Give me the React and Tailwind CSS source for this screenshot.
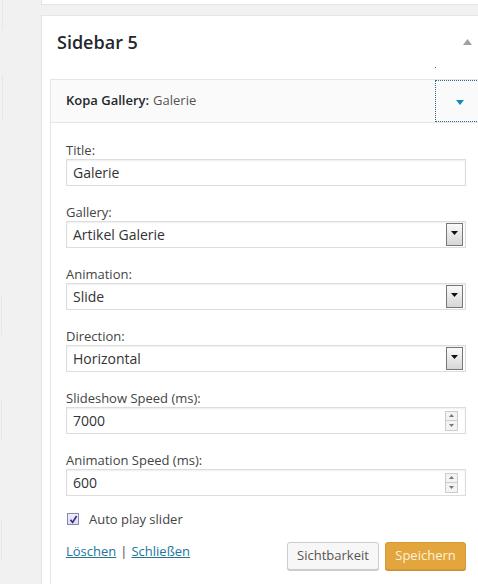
import React from "react";

const FONT = { fontFamily: '"Open Sans", "Noto Sans", Arial, sans-serif' };

const Label = ({ children }) => (
  <label className="block h-[18px] text-[13px] leading-[18px] text-[#444]">{children}</label>
);

// old-style select with a boxed arrow at the right edge
const SelectBox = ({ value }) => (
  <div className="flex items-center h-[27px] border border-[#ddd] bg-white shadow-[inset_0_1px_2px_rgba(0,0,0,0.07)] pl-[6px] pr-[2px]">
    <span className="flex-1 text-[14px] text-[#333]">{value}</span>
    <div className="w-[17px] h-[23px] border border-[#777] bg-gradient-to-b from-[#fafafa] to-[#d6d6d6] flex items-start justify-center pt-[7px]">
      <svg width="7" height="4" viewBox="0 0 7 4">
        <path d="M0 0h7L3.5 4z" fill="#111" />
      </svg>
    </div>
  </div>
);

const NumberBox = ({ value }) => (
  <div className="flex items-center h-[27px] border border-[#ddd] bg-white shadow-[inset_0_1px_2px_rgba(0,0,0,0.07)] pl-[6px] pr-[7px]">
    <span className="flex-1 text-[14px] text-[#333]">{value}</span>
    <div className="flex flex-col w-[13px]">
      <div className="h-[10px] border border-[#ccc] bg-[#f3f3f3] flex items-center justify-center">
        <svg width="5" height="3" viewBox="0 0 5 3">
          <path d="M0 3h5L2.5 0z" fill="#777" />
        </svg>
      </div>
      <div className="h-[10px] border border-t-0 border-[#ccc] bg-[#f3f3f3] flex items-center justify-center">
        <svg width="5" height="3" viewBox="0 0 5 3">
          <path d="M0 0h5L2.5 3z" fill="#777" />
        </svg>
      </div>
    </div>
  </div>
);

const TextBox = ({ value }) => (
  <div className="flex items-center h-[27px] border border-[#ddd] bg-white shadow-[inset_0_1px_2px_rgba(0,0,0,0.07)] px-[6px]">
    <span className="text-[14px] text-[#333]">{value}</span>
  </div>
);

const Field = ({ label, children }) => (
  <div className="mb-[17px]">
    <Label>{label}</Label>
    {children}
  </div>
);

export default function App() {
  return (
    <div className="w-[478px] h-[584px] bg-[#f1f1f1] overflow-hidden flex" style={FONT}>
      {/* collapsed widgets in the left column */}
      <div className="w-[41px] shrink-0 flex flex-col">
        <div className="h-[30px] w-[3px] shrink-0 border-r border-[#e6e6e6]" />
        <div className="h-[45px] shrink-0" />
        <div className="h-[45px] w-[3px] shrink-0 border-r border-[#e6e6e6]" />
        <div className="h-[175px] shrink-0" />
        <div className="h-[40px] w-[2px] shrink-0 border-r border-[#e6e6e6]" />
        <div className="h-[65px] shrink-0" />
        <div className="h-[40px] w-[2px] shrink-0 border-r border-[#e6e6e6]" />
        <div className="h-[80px] shrink-0" />
        <div className="h-[40px] w-[2px] shrink-0 border-r border-[#e6e6e6]" />
      </div>

      <div className="w-[445px] shrink-0 flex flex-col">
        <div className="h-[5px] shrink-0 bg-white border-b border-[#e5e5e5] border-l" />
        <div className="h-[10px] shrink-0" />

        {/* sidebar area */}
        <div className="flex-1 shrink-0 bg-white border-l border-t border-[#e5e5e5] shadow-[0_1px_1px_rgba(0,0,0,0.04)]">
          <div className="h-[63px] flex items-start pl-[15px] pr-[12px] pt-[14px]">
            <h2 className="flex-1 text-[18px] font-semibold text-[#23282d] leading-[24px]">Sidebar 5</h2>
            <svg width="9" height="6" viewBox="0 0 9 6" className="mt-[9px] mr-[2px]">
              <path d="M0 6h9L4.5 0z" fill="#a0a0a0" />
            </svg>
          </div>

          {/* open widget */}
          <div className="ml-[8px] w-[432px] border border-[#e5e5e5] bg-white">
            <div className="flex h-[43px] bg-[#fafafa] border-b border-[#e5e5e5]">
              <div className="flex-1 flex items-center pl-[15px] text-[13px] text-[#23282d]">
                <span className="font-semibold">Kopa Gallery:</span>
                <span className="ml-[4px] text-[#555]">Galerie</span>
              </div>
              <div className="relative w-[46px] border border-dotted border-[#2a6f80] flex items-center justify-start pl-[20px] pt-[2px]">
                <div className="absolute -top-[14px] left-[-1px] w-[1px] h-[1px] bg-[#555]" />
                <svg width="8" height="5" viewBox="0 0 8 5">
                  <path d="M0 0h8L4 5z" fill="#0f8bc0" />
                </svg>
              </div>
            </div>

            <div className="pt-[18px] pl-[15px] pr-[15px]">
              <Field label="Title:">
                <TextBox value="Galerie" />
              </Field>
              <Field label="Gallery:">
                <SelectBox value="Artikel Galerie" />
              </Field>
              <Field label="Animation:">
                <SelectBox value="Slide" />
              </Field>
              <Field label="Direction:">
                <SelectBox value="Horizontal" />
              </Field>
              <Field label="Slideshow Speed (ms):">
                <NumberBox value="7000" />
              </Field>
              <div>
                <Label>Animation Speed (ms):</Label>
                <NumberBox value="600" />
              </div>

              <div className="flex items-center mt-[14px] pl-[1px]">
                <div className="w-[12px] h-[12px] border border-[#8a8aa8] bg-gradient-to-b from-[#eef] to-[#dde] flex items-center justify-center">
                  <svg width="9" height="9" viewBox="0 0 9 9">
                    <path d="M1.5 4.8L3.6 7.4L7.6 1" fill="none" stroke="#2b2b8a" strokeWidth="1.6" />
                  </svg>
                </div>
                <span className="ml-[10px] text-[13px] text-[#444] leading-[18px]">Auto play slider</span>
              </div>

              <div className="flex justify-between mt-[14px]">
                <div className="text-[13px] text-[#444] leading-[18px]">
                  <a className="text-[#21759b] underline">Löschen</a>
                  <span className="mx-[4px]">|</span>
                  <a className="text-[#21759b] underline">Schließen</a>
                </div>
                <div className="flex gap-[6px]">
                  <button className="h-[28px] w-[92px] rounded-[3px] border border-[#ccc] bg-[#f7f7f7] text-[13px] text-[#555] shadow-[0_1px_0_#ccc]">
                    Sichtbarkeit
                  </button>
                  <button className="h-[28px] w-[81px] rounded-[3px] border border-[#d39a36] bg-[#e3a53d] text-[13px] text-[#fdf2da] shadow-[0_1px_0_#c88f2c]">
                    Speichern
                  </button>
                </div>
              </div>
              <div className="h-[20px]" />
            </div>
          </div>
        </div>
      </div>
    </div>
  );
}
